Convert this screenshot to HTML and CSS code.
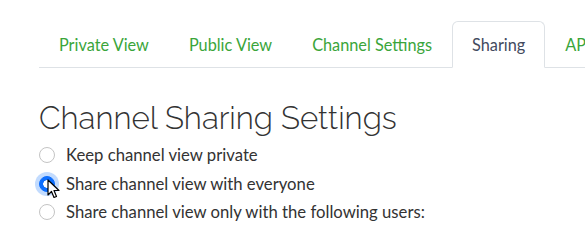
FILE: index.html
```html
<!DOCTYPE html>
<html lang="en">
<head>
  <meta charset="UTF-8">
  <title>Channel Sharing Settings</title>
  <link rel="stylesheet" href="styles.css">
</head>
<body>
  <div class="page">
    <ul class="tabs">
      <li><a href="#">Private View</a></li>
      <li><a href="#">Public View</a></li>
      <li><a href="#">Channel Settings</a></li>
      <li class="active"><a href="#">Sharing</a></li>
      <li><a href="#">API Keys</a></li>
    </ul>

    <h1>Channel Sharing Settings</h1>

    <form class="options">
      <label class="option">
        <input type="radio" name="sharing" value="private">
        <span>Keep channel view private</span>
      </label>
      <label class="option">
        <input type="radio" name="sharing" value="public" checked class="focused">
        <span>Share channel view with everyone</span>
        <svg class="cursor" width="13" height="20" viewBox="0 0 13 20">
          <path d="M1 1 L1 16 L4.5 12.5 L7 18.5 L9.5 17.5 L7 11.5 L12 11.5 Z" fill="#fff" stroke="#000" stroke-width="1.2" stroke-linejoin="round"/>
        </svg>
      </label>
      <label class="option">
        <input type="radio" name="sharing" value="users">
        <span>Share channel view only with the following users:</span>
      </label>
    </form>
  </div>
</body>
</html>
```

FILE: styles.css
```css
body {
  margin: 0;
  background: #fff;
  font-family: "Source Sans Pro", Lato, "Open Sans", sans-serif;
  color: #333;
}
.page {
  padding: 21px 0 0 39px;
  overflow: hidden;
}
.tabs {
  display: flex;
  list-style: none;
  margin: 0;
  padding: 0;
  border-bottom: 1px solid #dee2e6;
  white-space: nowrap;
}
.tabs li {
  margin-bottom: -1px;
}
.tabs a {
  display: block;
  padding: 12px 19px 11px;
  font-size: 16.3px;
  line-height: 22px;
  color: #3aa53a;
  text-decoration: none;
  border: 1px solid transparent;
  border-radius: 6px 6px 0 0;
}
.tabs .active a {
  color: #434a5e;
  border-color: #dee2e6 #dee2e6 #fff;
  background: #fff;
}
h1 {
  margin: 32px 0 5px;
  font-family: Raleway, Lato, sans-serif;
  font-weight: 300;
  font-size: 31.3px;
  line-height: 36px;
  color: #333;
}
.options {
  display: flex;
  flex-direction: column;
}
.option {
  position: relative;
  display: flex;
  align-items: center;
  gap: 11px;
  height: 28.5px;
  font-size: 16.7px;
  color: #333;
}
.option input {
  appearance: none;
  margin: 0;
  width: 16px;
  height: 16px;
  border: 1px solid #c4c4c4;
  border-radius: 50%;
  background: #fff;
}
.option input:checked {
  border-color: #0d6efd;
  background: #0d6efd radial-gradient(circle, #fff 0 3.5px, transparent 4px);
}
.option input.focused {
  box-shadow: 0 0 0 4px rgba(13, 110, 253, 0.25);
}
.cursor {
  position: absolute;
  left: 8px;
  top: 9px;
}
```
